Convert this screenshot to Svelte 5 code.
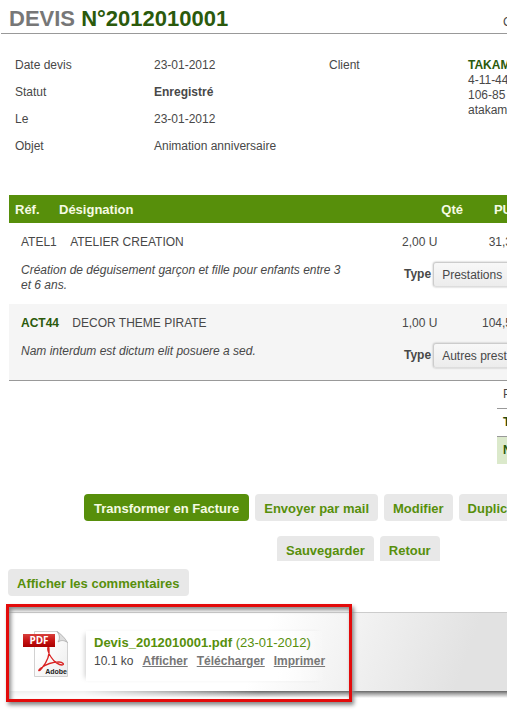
<script>
    const infos = [
        { label: 'Date devis', value: '23-01-2012' },
        { label: 'Statut', value: 'Enregistré', strong: true },
        { label: 'Le', value: '23-01-2012' },
        { label: 'Objet', value: 'Animation anniversaire' }
    ]
    const client = ['4-11-44', '106-85', 'atakam']
    const items = [
        {
            ref: 'ATEL1',
            name: 'ATELIER CREATION',
            text: 'Création de déguisement garçon et fille pour enfants entre 3 et 6 ans.',
            qty: '2,00 U',
            price: '31,3',
            type: 'Prestations'
        },
        {
            ref: 'ACT44',
            link: true,
            name: 'DECOR THEME PIRATE',
            text: 'Nam interdum est dictum elit posuere a sed.',
            qty: '1,00 U',
            price: '104,5',
            type: 'Autres prest'
        }
    ]
    const fileLinks = ['Afficher', 'Télécharger', 'Imprimer']
</script>

<main class="page">
    <header class="title">
        <h1>DEVIS <span>N°2012010001</span></h1>
        <span class="aside">C</span>
    </header>

    <section class="infos">
        <dl>
            {#each infos as info}
                <dt>{info.label}</dt>
                <dd class:strong={info.strong}>{info.value}</dd>
            {/each}
        </dl>
        <div class="client-label">Client</div>
        <address>
            <a href="#client">TAKAM</a>
            {#each client as line}
                <div>{line}</div>
            {/each}
        </address>
    </section>

    <table class="items">
        <colgroup>
            <col class="col-ref" />
            <col />
            <col class="col-qty" />
            <col class="col-price" />
        </colgroup>
        <thead>
            <tr>
                <th>Réf.</th>
                <th>Désignation</th>
                <th class="right">Qté</th>
                <th class="right price">PU</th>
            </tr>
        </thead>
        {#each items as item, i}
            <tbody>
                <tr class="line">
                    <td colspan="2" class="name">
                        {#if item.link}
                            <a href="#ref">{item.ref}</a>
                        {:else}
                            <span>{item.ref}</span>
                        {/if}
                        <span class="label">{item.name}</span>
                    </td>
                    <td>{item.qty}</td>
                    <td class="right price">{item.price}</td>
                </tr>
                <tr class="detail">
                    <td colspan="2" class="text"><p>{item.text}</p></td>
                    <td colspan="2">
                        <div class="type">
                            <label for="type-{i}">Type</label>
                            <select id="type-{i}">
                                <option>{item.type}</option>
                            </select>
                        </div>
                    </td>
                </tr>
            </tbody>
        {/each}
    </table>

    <div class="totals">
        <div>P</div>
        <div class="total">T</div>
        <div class="net">N</div>
    </div>

    <div class="actions">
        <button class="btn primary">Transformer en Facture</button>
        <button class="btn">Envoyer par mail</button>
        <button class="btn">Modifier</button>
        <button class="btn">Duplic</button>
    </div>
    <div class="actions second">
        <button class="btn">Sauvegarder</button>
        <button class="btn">Retour</button>
    </div>
    <div class="comments">
        <button class="btn">Afficher les commentaires</button>
    </div>

    <section class="files">
        <div class="panel">
            <svg class="pdf" width="46" height="48" viewBox="0 0 46 48" aria-hidden="true">
                <defs>
                    <linearGradient id="red" x1="0" y1="0" x2="0" y2="1">
                        <stop offset="0" stop-color="#d8403c" />
                        <stop offset="0.5" stop-color="#c81414" />
                        <stop offset="1" stop-color="#a80000" />
                    </linearGradient>
                    <linearGradient id="sheet" x1="0" y1="0" x2="1" y2="1">
                        <stop offset="0.3" stop-color="#fff" />
                        <stop offset="1" stop-color="#ececec" />
                    </linearGradient>
                </defs>
                <path d="M11.5 .5H34Q37 3 39 6L44.500 11.500V45.500H11.500Z" fill="url(#sheet)" stroke="#d2d2d2" />
                <path d="M34 .5C37 4 37 8 35 11C38 9 41 9 44.500 11.500C42 7 38 3 34 .5Z" fill="#ddd" stroke="#aaa" stroke-width="0.800" />
                <path d="M25 16C24 19 26 23 28 26C31 31 36 34 39 34C42 34 40 31 36 31C29 31 22 34 18 37C14 40 16 41 19 37C23 32 27 25 26 18C26 16 25 15 25 16Z" fill="none" stroke="#d92222" stroke-width="1.300" />
                <rect x="0" y="3" width="32" height="13" fill="url(#red)" />
                <text x="16" y="13" text-anchor="middle" class="pdf-tag">PDF</text>
                <text x="44" y="43" text-anchor="end" class="pdf-brand">Adobe</text>
            </svg>
            <div class="file">
                <div class="file-name"><a href="#file">Devis_2012010001.pdf</a> (23-01-2012)</div>
                <div class="file-links">
                    <span>10.1 ko</span>
                    {#each fileLinks as link}
                        <a href="#file">{link}</a>
                    {/each}
                </div>
            </div>
        </div>
        <div class="shade"></div>
        <div class="frame"></div>
    </section>
</main>

<style>
    :global(body) {
        background: #fff;
    }
    .page {
        overflow: hidden;
        padding-bottom: 14px;
        font: 12px/15px "Liberation Sans", Arial, sans-serif;
        color: #484848;
    }
    a {
        color: #2b5a0c;
        font-weight: bold;
        text-decoration: none;
    }
    .title {
        display: flex;
        justify-content: space-between;
        align-items: flex-end;
        height: 33px;
        margin-left: 1px;
        padding-left: 8px;
        border-bottom: 1px solid #999;
        white-space: nowrap;
    }
    h1 {
        margin: 0;
        font-size: 22px;
        line-height: 28px;
        color: #777;
    }
    h1 span {
        color: #2b5a0c;
    }
    .aside {
        width: 4px;
        line-height: 22px;
    }
    .infos {
        display: flex;
        padding: 24px 0 0 15px;
        height: 137px;
        white-space: nowrap;
    }
    dl {
        display: grid;
        grid-template-columns: 139px 175px;
        grid-auto-rows: 15px;
        row-gap: 12px;
        margin: 0;
    }
    dd {
        margin: 0;
    }
    .strong {
        font-weight: bold;
    }
    .client-label {
        width: 139px;
        flex-shrink: 0;
    }
    address {
        font-style: normal;
    }
    .items {
        width: 100%;
        min-width: 504px;
        margin-left: 9px;
        table-layout: fixed;
        border-collapse: collapse;
        border-bottom: 1px solid #999;
    }
    .col-ref {
        width: 50px;
    }
    .col-qty {
        width: 61px;
    }
    .col-price {
        width: 53px;
    }
    th {
        height: 28px;
        padding: 0;
        background: #578f0b;
        color: #f6fbe4;
        font-size: 13px;
        text-align: left;
    }
    th:first-child {
        padding-left: 6px;
    }
    td {
        padding: 0;
        vertical-align: top;
    }
    .right {
        text-align: right;
    }
    .items .price {
        padding-right: 4px;
    }
    tbody:nth-of-type(even) {
        background: #f5f5f5;
    }
    .line td {
        height: 26px;
        padding-top: 12px;
    }
    .line .name,
    .detail .text {
        padding-left: 12px;
    }
    .label {
        margin-left: 10px;
    }
    .detail td {
        padding-top: 1px;
        padding-bottom: 11px;
    }
    .detail p {
        max-width: 330px;
        margin: 1px 0 0;
        font-style: italic;
    }
    .type {
        display: flex;
        gap: 2px;
        height: 26px;
        padding-left: 2px;
        font-weight: bold;
        line-height: 24px;
    }
    select {
        appearance: none;
        width: 120px;
        height: 25px;
        padding: 0 8px;
        border: 1px solid #ccc;
        border-bottom-color: #ddd;
        border-radius: 3px;
        background: linear-gradient(#f8f8f8, #ececec);
        box-shadow: 0 0 2px #aaa;
        font: inherit;
        font-weight: normal;
        color: #484848;
    }
    .totals {
        width: 10px;
        margin-left: auto;
        line-height: 27px;
    }
    .totals div {
        height: 27px;
        padding-left: 6px;
        border-bottom: 1px solid #999;
    }
    .totals .total {
        font-weight: bold;
        color: #2b4a0c;
    }
    .totals .net {
        border-bottom: 0;
        background: #dbe9cb;
        font-weight: bold;
        color: #2b5a0c;
    }
    .actions {
        display: flex;
        gap: 6px;
        padding: 30px 0 0 84px;
    }
    .second {
        padding: 15px 0 0 277px;
    }
    .second .btn {
        height: 25px;
        padding-top: 4px;
        border-radius: 4px 4px 0 0;
    }
    .comments {
        padding: 8px 0 0 8px;
    }
    .btn {
        flex-shrink: 0;
        height: 27px;
        padding: 2px 9px 0;
        border: 0;
        border-radius: 4px;
        background: #e8e8e8;
        color: #578f0b;
        font: bold 13px/15px "Liberation Sans", Arial, sans-serif;
        white-space: nowrap;
    }
    .primary {
        padding: 2px 10px 0;
        background: #578f0b;
        color: #f6fbe4;
    }
    .files {
        position: relative;
        padding: 16px 0 0 9px;
    }
    .panel {
        display: flex;
        height: 78px;
        border-top: 1px solid #ccc;
        background: linear-gradient(110deg, #fff 50%, #f0f0f0 70%, #e2e2e2 90%);
    }
    .shade {
        height: 7px;
        background: linear-gradient(#666, #aaa 40%, #fff);
        mask-image: linear-gradient(to right, rgba(0, 0, 0, 0.1) 15%, #000 50%);
    }
    .pdf {
        margin: 18px 0 0 14px;
    }
    .pdf-tag {
        font: bold 10px "Open Sans", sans-serif;
        fill: #fff;
    }
    .pdf-brand {
        font: bold 7px "Liberation Sans", Arial, sans-serif;
        fill: #222;
    }
    .file {
        margin: 18px 0 0 17px;
        padding: 2px 0 0 8px;
        height: 48px;
        background: linear-gradient(to right, #fff 80%, transparent);
        box-shadow: -4px 0 5px -3px #ccc;
        line-height: 19px;
        white-space: nowrap;
    }
    .file-name,
    .file-name a {
        color: #578f0b;
    }
    .file-name {
        font-size: 13px;
    }
    .file-links {
        display: flex;
        gap: 9px;
    }
    .file-links a {
        color: #777;
        text-decoration: underline;
    }
    .frame {
        position: absolute;
        top: 8px;
        left: 6px;
        width: 340px;
        height: 92px;
        border: 3px solid #e30b0b;
        box-shadow: 2px 3px 4px #888, inset 2px 3px 4px #888;
        pointer-events: none;
    }
</style>
